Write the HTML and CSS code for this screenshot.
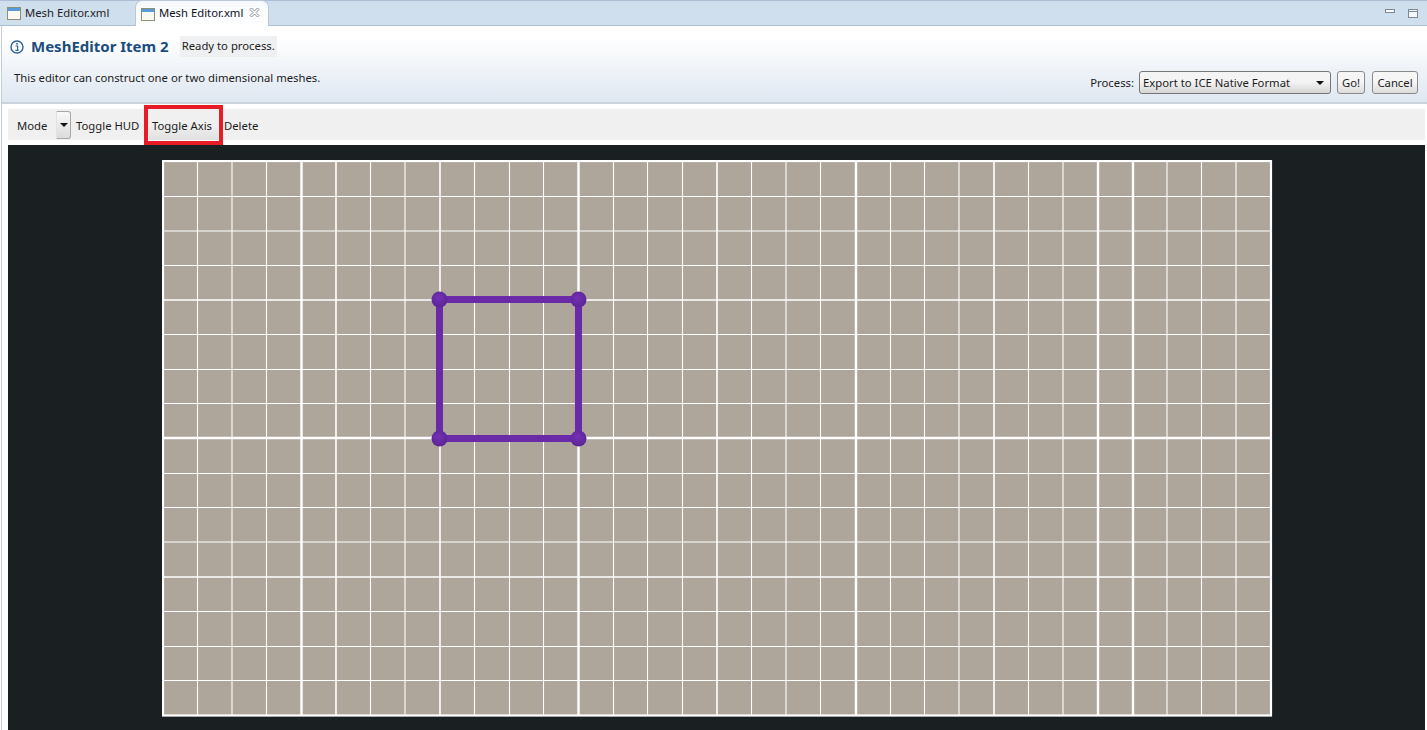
FILE: index.html
```html
<!DOCTYPE html>
<html lang="en">

<head>
    <meta charset="UTF-8">
    <title>Mesh Editor.xml</title>
    <link rel="stylesheet" href="styles.css">
</head>

<body>
    <div class="tabbar">
        <div class="tab">
            <svg class="tab-icon" width="14" height="13" viewBox="0 0 14 13"><rect x=".5" y=".5" width="13" height="12" fill="#fbfaf2" stroke="#8c8f78"/><rect x="1" y="1" width="12" height="3" fill="#5b9ad8"/></svg>
            <span>Mesh Editor.xml</span>
        </div>
        <div class="tab active">
            <svg class="tab-icon" width="14" height="13" viewBox="0 0 14 13"><rect x=".5" y=".5" width="13" height="12" fill="#fbfaf2" stroke="#8c8f78"/><rect x="1" y="1" width="12" height="3" fill="#5b9ad8"/></svg>
            <span>Mesh Editor.xml</span>
            <svg class="tab-close" width="11" height="11" viewBox="0 0 11 11"><path d="M1 2.500 2.500 1 5.500 4 8.500 1 10 2.500 7 5.500 10 8.500 8.500 10 5.500 7 2.500 10 1 8.500 4 5.500Z" fill="#fff" stroke="#8a9097"/></svg>
        </div>
        <div class="win-btns">
            <svg width="10" height="4" viewBox="0 0 10 4"><rect x=".5" y=".5" width="9" height="3" fill="#fff" stroke="#7d8894"/></svg>
            <svg width="10" height="9" viewBox="0 0 10 9"><rect x=".5" y=".5" width="9" height="8" fill="#f4f7fb" stroke="#7d8894"/><path d="M1 2.500h8" stroke="#7d8894"/></svg>
        </div>
    </div>

    <div class="editor">
        <header class="form-head">
            <div class="form-info">
                <div class="form-title">
                    <svg width="14" height="14" viewBox="0 0 14 14"><circle cx="7" cy="7" r="6" fill="#fff" stroke="#2a6299" stroke-width="1.400"/><rect x="6.200" y="3" width="1.600" height="1.600" fill="#2a6299"/><path d="M5.500 6H7.600V10.200H8.600M5.400 10.400H8.600" fill="none" stroke="#2a6299" stroke-width="1.200"/></svg>
                    <h1>MeshEditor Item 2</h1>
                    <span class="status">Ready to process.</span>
                </div>
                <p class="desc">This editor can construct one or two dimensional meshes.</p>
            </div>
            <div class="process">
                <span>Process:</span>
                <div class="combo">
                    <span>Export to ICE Native Format</span>
                    <i class="arrow"></i>
                </div>
                <button class="btn go">Go!</button>
                <button class="btn cancel">Cancel</button>
            </div>
        </header>

        <div class="toolbar">
            <span class="tool mode">Mode</span>
            <span class="drop"><i class="arrow"></i></span>
            <span class="tool hud">Toggle HUD</span>
            <span class="tool axis">Toggle Axis</span>
            <span class="tool delete">Delete</span>
        </div>

        <div class="viewport">
            <svg class="mesh" width="1112" height="558" viewBox="162 160 1112 558">
                <defs>
                    <radialGradient id="node" cx="45%" cy="40%" r="60%">
                        <stop offset="0" stop-color="#7430b4"/>
                        <stop offset="1" stop-color="#5b2596"/>
                    </radialGradient>
                </defs>
                <rect x="163" y="161" width="1108" height="555" fill="#aea69b"/>
                <g class="grid-thin" stroke="#fff" stroke-width="1.100">
                    <path d="M197.500 161V716M232 161V716M266.500 161V716M370.500 161V716M405 161V716M474.500 161V716M509.500 161V716M543.500 161V716M613.500 161V716M647.500 161V716M682.500 161V716M751.500 161V716M786 161V716M820.500 161V716M890.500 161V716M924.500 161V716M959 161V716M1028.500 161V716M1063 161V716M1167 161V716M1201.500 161V716M1236 161V716"/>
                    <path d="M163 196.500H1271M163 231H1271M163 265.500H1271M163 334.500H1271M163 369.500H1271M163 403.500H1271M163 473.500H1271M163 507.500H1271M163 542H1271M163 611.500H1271M163 646.500H1271M163 680.500H1271"/>
                </g>
                <g class="grid-mid" stroke="#fff" stroke-width="1.600">
                    <path d="M336 161V716M440 161V716M717 161V716M994 161V716"/>
                    <path d="M163 300H1271M163 577H1271"/>
                </g>
                <g class="grid-thick" stroke="#fff" stroke-width="2.400">
                    <path d="M301.500 161V716M578.500 161V716M856 161V716M1098 161V716M1133 161V716"/>
                    <path d="M163 438H1271"/>
                </g>
                <rect x="163" y="161" width="1108" height="554.500" fill="none" stroke="#fff" stroke-width="2.200"/>
                <rect x="439.500" y="299.500" width="139" height="139" fill="none" stroke="#6a2aa8" stroke-width="7"/>
                <circle cx="439.500" cy="299.500" r="8" fill="url(#node)"/>
                <circle cx="578.500" cy="299.500" r="8" fill="url(#node)"/>
                <circle cx="439.500" cy="438.500" r="8" fill="url(#node)"/>
                <circle cx="578.500" cy="438.500" r="8" fill="url(#node)"/>
            </svg>
        </div>
    </div>
</body>

</html>
```

FILE: styles.css
```css
* {
    box-sizing: border-box;
}
html,
body {
    height: 100%;
    margin: 0;
    padding: 0;
    overflow: hidden;
    background: #fff;
    color: #1c1c1c;
    font-family: "Noto Sans", "Open Sans", sans-serif;
    font-size: 11.3px;
}

/* tab strip */
.tabbar {
    display: flex;
    align-items: flex-end;
    height: 26px;
    padding-left: 2px;
    background: #d0dfee;
    border-top: 1px solid #aebed2;
    border-bottom: 1px solid #aebed2;
}
.tab {
    display: flex;
    align-items: center;
    width: 134px;
    height: 24px;
    padding: 0 0 2px 5px;
    color: #222;
}
.tab-icon {
    margin: 3px 4px 0 0;
}
.tab.active {
    height: 26px;
    margin-bottom: -1px;
    margin-left: -1px;
    background: linear-gradient(#f6f9fc, #fff);
    border: 1px solid #b9c7d8;
    border-bottom: 0;
    border-radius: 7px 7px 0 0;
    color: #10101c;
}
.tab-close {
    margin-left: 6px;
}
.win-btns {
    display: flex;
    align-items: flex-start;
    gap: 13px;
    height: 100%;
    margin-left: auto;
    padding: 8px 9px 0 0;
}

/* form */
.editor {
    display: flex;
    flex-direction: column;
    height: 704px;
    margin-left: 1px;
    border-left: 1px solid #c5ced8;
}
.form-head {
    display: flex;
    justify-content: space-between;
    align-items: flex-end;
    height: 78px;
    padding: 0 9px 8px 8px;
    background: linear-gradient(#fff 15%, #dfe7f1);
    border-bottom: 2px solid #c9d3de;
}
.form-info {
    align-self: flex-start;
}
.form-title {
    display: flex;
    align-items: center;
    height: 21px;
    margin-top: 10px;
}
.form-title h1 {
    margin: 0 11px 2px 7px;
    color: #1a4c7d;
    font-size: 15px;
    font-weight: 700;
}
.status {
    height: 21px;
    padding: 0 2px;
    background: #eef0f2;
    line-height: 20px;
}
.desc {
    margin: 12px 0 0 4px;
    line-height: 17px;
}
.process {
    display: flex;
    align-items: center;
}
.combo {
    display: flex;
    align-items: center;
    justify-content: space-between;
    width: 192px;
    height: 23px;
    margin: 0 6px 0 5px;
    padding: 0 6px 0 3px;
    background: linear-gradient(#f4f4f4 45%, #d6d6d6);
    border: 1px solid #767676;
    border-radius: 3px;
}
.btn {
    height: 23px;
    padding: 0;
    background: linear-gradient(#f6f6f6 45%, #dcdcdc);
    border: 1px solid #8a8a8a;
    border-radius: 3px;
    color: inherit;
    font: inherit;
}
.go {
    width: 28px;
    margin-right: 7px;
}
.cancel {
    width: 46px;
}
.arrow {
    display: block;
    width: 0;
    height: 0;
    border-left: 4px solid transparent;
    border-right: 4px solid transparent;
    border-top: 4px solid #111;
}

/* toolbar */
.toolbar {
    display: flex;
    align-items: center;
    height: 31px;
    margin: 5px 0 0 6px;
    width: 1417px;
    padding-left: 5px;
    background: #f0f0f0;
}
.tool {
    padding: 2px 4px 0;
    white-space: nowrap;
}
.mode {
    width: 39px;
    margin-right: 4px;
}
.drop {
    display: flex;
    align-items: center;
    justify-content: center;
    width: 15px;
    height: 28px;
    background: linear-gradient(#f8f8f8, #dcdcdc);
    border: 1px solid #a8a8a8;
    border-left-color: #e2e2e2;
    border-radius: 0 3px 3px 0;
}
.hud {
    width: 74px;
    margin-left: 1px;
}
.axis {
    position: relative;
    display: flex;
    align-items: center;
    width: 69px;
    height: 30px;
    margin-left: 3px;
    padding: 2px 3px 0;
    background: linear-gradient(#f0f0f0 50%, #e0e0e0);
}
/* red callout drawn over the screenshot */
.axis::after {
    content: "";
    position: absolute;
    top: -5px;
    right: -5px;
    bottom: -5px;
    left: -5px;
    border: 4px solid #e81c27;
}
.delete {
    margin-left: 2px;
}

/* 3d view */
.viewport {
    flex: 1;
    width: 1417px;
    margin: 5px 0 0 6px;
    padding: 15px 0 0 154px;
    background: #1a1f22;
}
.mesh {
    display: block;
}
```
